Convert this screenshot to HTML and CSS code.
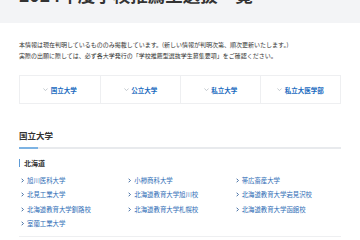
FILE: index.html
```html
<!DOCTYPE html>
<html lang="ja">
<head>
<meta charset="utf-8">
<link rel="stylesheet" href="styles.css">
</head>
<body>
<header class="hero">
  <h1 class="title">2024年度学校推薦型選抜一覧</h1>
</header>
<main class="wrap">
  <p class="note">本情報は現在判明しているもののみ掲載しています。(新しい情報が判明次第、順次更新いたします。)<br>実際の出願に際しては、必ず各大学発行の「学校推薦型選抜学生募集要項」をご確認ください。</p>
  <nav class="tabs">
    <a class="tab"><svg class="dn" viewBox="0 0 6 4"><path d="M0.5 0.5 L3 3 L5.5 0.5" fill="none" stroke="#9aa3ad" stroke-width="0.7"/></svg>国立大学</a>
    <a class="tab"><svg class="dn" viewBox="0 0 6 4"><path d="M0.5 0.5 L3 3 L5.5 0.5" fill="none" stroke="#9aa3ad" stroke-width="0.7"/></svg>公立大学</a>
    <a class="tab"><svg class="dn" viewBox="0 0 6 4"><path d="M0.5 0.5 L3 3 L5.5 0.5" fill="none" stroke="#9aa3ad" stroke-width="0.7"/></svg>私立大学</a>
    <a class="tab"><svg class="dn" viewBox="0 0 6 4"><path d="M0.5 0.5 L3 3 L5.5 0.5" fill="none" stroke="#9aa3ad" stroke-width="0.7"/></svg>私立大医学部</a>
  </nav>
  <h2 class="sec">国立大学</h2>
  <div class="rule"><span class="rule-accent"></span><span class="rule-line"></span></div>
  <h3 class="region">北海道</h3>
  <ul class="links">
    <li><svg class="rt" viewBox="0 0 4 6"><path d="M0.8 0.6 L3.2 3 L0.8 5.4" fill="none" stroke="#1d4f8f" stroke-width="1.1"/></svg>旭川医科大学</li>
    <li><svg class="rt" viewBox="0 0 4 6"><path d="M0.8 0.6 L3.2 3 L0.8 5.4" fill="none" stroke="#1d4f8f" stroke-width="1.1"/></svg>小樽商科大学</li>
    <li><svg class="rt" viewBox="0 0 4 6"><path d="M0.8 0.6 L3.2 3 L0.8 5.4" fill="none" stroke="#1d4f8f" stroke-width="1.1"/></svg>帯広畜産大学</li>
    <li><svg class="rt" viewBox="0 0 4 6"><path d="M0.8 0.6 L3.2 3 L0.8 5.4" fill="none" stroke="#1d4f8f" stroke-width="1.1"/></svg>北見工業大学</li>
    <li><svg class="rt" viewBox="0 0 4 6"><path d="M0.8 0.6 L3.2 3 L0.8 5.4" fill="none" stroke="#1d4f8f" stroke-width="1.1"/></svg>北海道教育大学旭川校</li>
    <li><svg class="rt" viewBox="0 0 4 6"><path d="M0.8 0.6 L3.2 3 L0.8 5.4" fill="none" stroke="#1d4f8f" stroke-width="1.1"/></svg>北海道教育大学岩見沢校</li>
    <li><svg class="rt" viewBox="0 0 4 6"><path d="M0.8 0.6 L3.2 3 L0.8 5.4" fill="none" stroke="#1d4f8f" stroke-width="1.1"/></svg>北海道教育大学釧路校</li>
    <li><svg class="rt" viewBox="0 0 4 6"><path d="M0.8 0.6 L3.2 3 L0.8 5.4" fill="none" stroke="#1d4f8f" stroke-width="1.1"/></svg>北海道教育大学札幌校</li>
    <li><svg class="rt" viewBox="0 0 4 6"><path d="M0.8 0.6 L3.2 3 L0.8 5.4" fill="none" stroke="#1d4f8f" stroke-width="1.1"/></svg>北海道教育大学函館校</li>
    <li><svg class="rt" viewBox="0 0 4 6"><path d="M0.8 0.6 L3.2 3 L0.8 5.4" fill="none" stroke="#1d4f8f" stroke-width="1.1"/></svg>室蘭工業大学</li>
  </ul>
  <div class="bottom-line"></div>
</main>
</body>
</html>
```

FILE: styles.css
```css
* { box-sizing: border-box; }
html, body {
  margin: 0;
  padding: 0;
  background: #fff;
  font-family: "Noto Sans CJK JP", "Noto Sans", sans-serif;
  color: #333;
  overflow: hidden;
}
.hero {
  background: #f3f4f6;
  height: 23px;
  padding: 0 19px;
  overflow: hidden;
}
.title {
  margin: -14px 0 0 0;
  font-size: 17.5px;
  line-height: 18px;
  font-weight: 700;
  color: #333;
  white-space: nowrap;
}
.wrap {
  padding: 0 19px;
}
.note {
  margin: 15.5px 0 0 0;
  font-size: 6px;
  line-height: 11px;
  color: #333;
  white-space: nowrap;
}
.tabs {
  margin-top: 14.5px;
  display: grid;
  grid-template-columns: repeat(4, 1fr);
  border: 1px solid #eeeff1;
  height: 29px;
}
.tab {
  display: flex;
  align-items: center;
  justify-content: center;
  gap: 1.5px;
  font-size: 6.5px;
  font-weight: 700;
  color: #1a6bc0;
  border-left: 1px solid #eeeff1;
}
.tab:first-child { border-left: none; }
.dn { width: 5px; height: 3.5px; margin-right: 1px; }
.sec {
  margin: 25px 0 0 0;
  font-size: 8.5px;
  line-height: 12px;
  font-weight: 700;
  color: #333;
  padding-bottom: 6px;
}
.rule {
  display: flex;
  height: 1.5px;
}
.rule-accent { width: 19px; background: #7db3e3; }
.rule-line { flex: 1; background: #e8eaed; }
.region {
  margin: 10.5px 0 0 0;
  font-size: 7px;
  line-height: 8px;
  font-weight: 700;
  color: #333;
  border-left: 1.5px solid #5d9ad6;
  padding-left: 4px;
}
.links {
  list-style: none;
  margin: 6.5px 0 0 0;
  padding: 0;
  display: grid;
  grid-template-columns: repeat(3, 1fr);
  grid-auto-rows: 14.33px;
}
.links li {
  display: flex;
  align-items: center;
  font-size: 6.4px;
  color: #2d6cb5;
  white-space: nowrap;
  padding-left: 2px;
}
.rt { width: 3px; height: 5px; margin-right: 3px; }
.bottom-line {
  margin-top: 5px;
  height: 1px;
  background: #eeeff1;
}
```
